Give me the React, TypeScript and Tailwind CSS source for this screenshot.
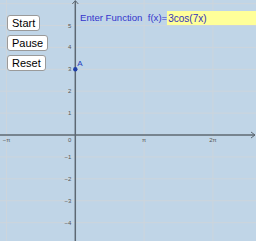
import React from 'react';

const ORIGIN_X = 75.3;
const ORIGIN_Y = 135;
const UNIT = 21.9;

export default function App() {
  const yTicks = [5, 4, 3, 2, 1, -1, -2, -3, -4];
  const xTicks = [
    { v: -Math.PI, label: '−π' },
    { v: Math.PI, label: 'π' },
    { v: 2 * Math.PI, label: '2π' },
  ];
  const gridYs = [-5, -4, -3, -2, -1, 0, 1, 2, 3, 4, 5, 6];

  return (
    <div
      className="relative w-[256px] h-[241px] overflow-hidden bg-[#c0d5e7]"
      style={{ fontFamily: '"Liberation Sans", Arial, sans-serif' }}
    >
      {/* Graphics view */}
      <svg className="absolute inset-0" width="256" height="241" viewBox="0 0 256 241">
        {gridYs.map((k) => (
          <line
            key={'h' + k}
            x1="0"
            x2="256"
            y1={ORIGIN_Y - k * UNIT}
            y2={ORIGIN_Y - k * UNIT}
            stroke="#cdd5dc"
            strokeWidth="1"
          />
        ))}
        {[-1, 1, 2].map((k) => (
          <line
            key={'v' + k}
            x1={ORIGIN_X + k * Math.PI * UNIT}
            x2={ORIGIN_X + k * Math.PI * UNIT}
            y1="0"
            y2="241"
            stroke="#cdd5dc"
            strokeWidth="1"
          />
        ))}

        {/* axes */}
        <line x1="0" x2="255" y1={ORIGIN_Y} y2={ORIGIN_Y} stroke="#5d6873" strokeWidth="1.5" />
        <line x1={ORIGIN_X} x2={ORIGIN_X} y1="1" y2="241" stroke="#5d6873" strokeWidth="1.5" />
        <path d={`M251 ${ORIGIN_Y - 3} L255 ${ORIGIN_Y} L251 ${ORIGIN_Y + 3}`} fill="none" stroke="#5d6873" strokeWidth="1" />
        <path d={`M${ORIGIN_X - 3} 4 L${ORIGIN_X} 0.5 L${ORIGIN_X + 3} 4`} fill="none" stroke="#5d6873" strokeWidth="1" />

        {/* tick labels */}
        {yTicks.map((k) => (
          <text
            key={'yl' + k}
            x={ORIGIN_X - 4}
            y={ORIGIN_Y - k * UNIT + 2}
            textAnchor="end"
            fontSize="6"
            fill="#555"
            fontFamily="Liberation Sans, sans-serif"
          >
            {k < 0 ? '−' + -k : k}
          </text>
        ))}
        <text x={ORIGIN_X - 4} y={ORIGIN_Y + 7} textAnchor="end" fontSize="6" fill="#555" fontFamily="Liberation Sans, sans-serif">
          0
        </text>
        {xTicks.map((t) => (
          <text
            key={t.label}
            x={ORIGIN_X + t.v * UNIT}
            y={ORIGIN_Y + 7}
            textAnchor="middle"
            fontSize="6"
            fill="#555"
            fontFamily="Liberation Sans, sans-serif"
          >
            {t.label}
          </text>
        ))}

        {/* point A */}
        <circle cx={ORIGIN_X} cy={ORIGIN_Y - 3 * UNIT} r="2.2" fill="#1f3fa8" />
        <text x={ORIGIN_X + 2} y={ORIGIN_Y - 3 * UNIT - 3} fontSize="8" fill="#2440c0" fontFamily="Liberation Sans, sans-serif">
          A
        </text>
      </svg>

      {/* Buttons */}
      <div className="absolute left-[7px] top-[15px] flex flex-col items-start gap-[4px]">
        {['Start', 'Pause', 'Reset'].map((b) => (
          <button
            key={b}
            className="h-[16px] px-[4px] bg-white border border-[#9a9a9a] rounded-[3px] text-[11px] leading-none text-black"
          >
            {b}
          </button>
        ))}
      </div>

      {/* Input */}
      <div className="absolute left-[80px] top-[11px] flex items-center">
        <span className="text-[9.6px] text-[#3434cc] whitespace-pre">Enter Function  f(x)=</span>
        <div className="w-[90px] h-[14px] bg-[#ffff99] flex items-center pl-[1px] text-[10px] text-[#3434b8]">
          3cos(7x)
        </div>
      </div>
    </div>
  );
}
